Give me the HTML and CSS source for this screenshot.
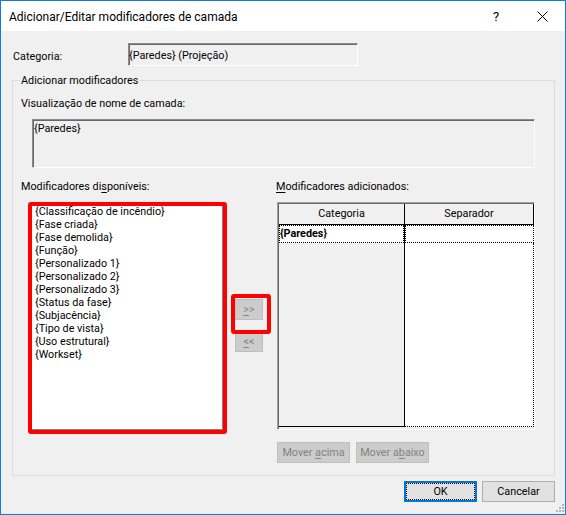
FILE: index.html
```html
<!DOCTYPE html>
<html lang="pt">
<head>
<meta charset="utf-8">
<title>Adicionar/Editar modificadores de camada</title>
<link rel="stylesheet" href="styles.css">
</head>
<body>
<div class="window">
  <div class="titlebar">
    <span class="title">Adicionar/Editar modificadores de camada</span>
    <span class="cap-btn help">?</span>
    <span class="cap-btn close"><svg width="11" height="11" viewBox="0 0 11 11"><path d="M0.5 0.5L10.5 10.5M10.5 0.5L0.5 10.5" stroke="#000" stroke-width="1" fill="none"/></svg></span>
  </div>
  <div class="content">
    <div class="cat-row">
      <div class="cat-label">Categoria:</div>
      <div class="cat-field sunken">{Paredes} (Projeção)</div>
    </div>
    <div class="group">
      <div class="group-label">Adicionar modificadores</div>
      <div class="preview-lbl">Visualização de nome de camada:</div>
      <div class="preview sunken">{Paredes}</div>
      <div class="lists">
        <div class="col-left">
          <div class="lbl">Modificadores di<u>s</u>poníveis:</div>
          <div class="left-row">
            <div class="hl-frame">
              <div class="listbox">
                <ul class="items">
                  <li>{Classificação de incêndio}</li>
                  <li>{Fase criada}</li>
                  <li>{Fase demolida}</li>
                  <li>{Função}</li>
                  <li>{Personalizado 1}</li>
                  <li>{Personalizado 2}</li>
                  <li>{Personalizado 3}</li>
                  <li>{Status da fase}</li>
                  <li>{Subjacência}</li>
                  <li>{Tipo de vista}</li>
                  <li>{Uso estrutural}</li>
                  <li>{Workset}</li>
                </ul>
              </div>
            </div>
            <div class="arrows">
              <div class="btn dis btn-sm hl"><span><u>&gt;</u>&gt;</span></div>
              <div class="btn dis btn-sm"><span><u>&lt;</u>&lt;</span></div>
            </div>
          </div>
        </div>
        <div class="col-right">
          <div class="lbl"><u>M</u>odificadores adicionados:</div>
          <div class="table">
            <div class="table-inner">
              <div class="tcol tcol1">
                <div class="th">Categoria</div>
                <div class="td">{Paredes}</div>
                <div class="tfill tfill1"></div>
              </div>
              <div class="tcol tcol2">
                <div class="th th2">Separador</div>
                <div class="td"></div>
                <div class="tfill tfill2"></div>
              </div>
            </div>
          </div>
          <div class="move-row">
            <div class="btn dis btn-md"><span>Mover <u>a</u>cima</span></div>
            <div class="btn dis btn-md"><span>Mover a<u>b</u>aixo</span></div>
          </div>
        </div>
      </div>
    </div>
    <div class="footer">
      <div class="btn btn-md ok"><span>OK</span></div>
      <div class="btn btn-md"><span>Cancelar</span></div>
    </div>
  </div>
  <svg class="grip" width="12" height="12" viewBox="0 0 12 12">
    <rect x="10" y="3" width="2" height="2" fill="#b4b4b4"/>
    <rect x="7" y="6" width="2" height="2" fill="#b4b4b4"/>
    <rect x="10" y="6" width="2" height="2" fill="#b4b4b4"/>
    <rect x="4" y="9" width="2" height="2" fill="#b4b4b4"/>
    <rect x="7" y="9" width="2" height="2" fill="#b4b4b4"/>
    <rect x="10" y="9" width="2" height="2" fill="#b4b4b4"/>
  </svg>
</div>
</body>
</html>
```
FILE: styles.css
```css
* { box-sizing: border-box; }
html, body { margin: 0; padding: 0; }
body {
  width: 566px;
  height: 515px;
  font-family: Roboto, "Liberation Sans", sans-serif;
  font-size: 10.8px;
  line-height: 13px;
  color: #000;
  background: #f0f0f0;
}
u { text-decoration: underline; text-underline-offset: 2px; }

.window {
  position: relative;
  width: 566px;
  height: 515px;
  border: 1px solid #1779d8;
  background: #f0f0f0;
  display: flex;
  flex-direction: column;
}
.titlebar {
  flex: none;
  height: 30px;
  background: #fff;
  display: flex;
  align-items: center;
}
.title {
  flex: 1;
  padding-left: 8px;
  padding-top: 1px;
  font-size: 12px;
  line-height: 16px;
}
.cap-btn {
  width: 46px;
  height: 30px;
  display: flex;
  align-items: center;
  justify-content: center;
}
.help { font-size: 13px; padding-top: 1px; }

.content { padding: 12px 10px 0 11px; }

.sunken {
  border: 1px solid;
  border-color: #8c8c8c #fff #fff #8c8c8c;
  box-shadow: inset 1px 1px 0 #696969;
  background: #f0f0f0;
}
.cat-row { display: flex; height: 23px; }
.cat-label { width: 115px; margin-left: 1px; padding-top: 7px; }
.cat-field {
  width: 230px;
  height: 23px;
  padding: 5px 0 0 0;
  white-space: nowrap;
}

.group {
  margin-top: 14px;
  border: 1px solid #dcdcdc;
  padding: 0 0 12px 8px;
}
.group-label {
  margin: -7px 0 0 -1px;
  width: max-content;
  background: #f0f0f0;
  padding: 0 1px;
}
.preview-lbl { margin-top: 10px; }
.preview {
  margin: 9px 0 0 11px;
  width: 503px;
  height: 49px;
  padding: 2px 0 0 1px;
}

.lists { display: flex; margin-top: 12px; }
.col-left { width: 255px; flex: none; }
.left-row { display: flex; margin-top: 9px; }
.hl-frame {
  margin-left: 7px;
  width: 199px;
  height: 232px;
  border: 4px solid #ff0000;
  border-radius: 3px;
}
.listbox {
  height: 100%;
  background: #fff;
  border-right: 1px solid #828282;
  border-bottom: 1px solid #828282;
  padding-left: 3px;
  overflow: hidden;
}
.items { list-style: none; margin: -1px 0 0; padding: 0; }
.items li { height: 13px; white-space: nowrap; }

.arrows {
  margin-left: 8px;
  padding-top: 97px;
  display: flex;
  flex-direction: column;
  gap: 11px;
}

.btn {
  display: flex;
  align-items: center;
  justify-content: center;
  background: #e1e1e1;
  border: 1px solid #adadad;
  white-space: nowrap;
}
.btn.dis {
  background: #cccccc;
  border-color: #bfbfbf;
  color: #838383;
}
.btn-sm { width: 28px; height: 21px; }
.btn-md { width: 73px; height: 21px; }
.hl { position: relative; }
.hl::after {
  content: "";
  position: absolute;
  left: -5px;
  top: -6px;
  width: 32px;
  height: 32px;
  border: 4px solid #ff0000;
  border-radius: 3px;
}

.col-right { flex: 1; }
.table {
  margin: 9px 0 0 1px;
  width: 258px;
  height: 228px;
  border: 1px solid;
  border-color: #a0a0a0 #fff #fff #a0a0a0;
  background: #f0f0f0;
}
.table-inner {
  height: 100%;
  border-top: 1px solid #696969;
  border-left: 1px solid #696969;
  padding-bottom: 2px;
  display: flex;
}
.tcol { display: flex; flex-direction: column; }
.tcol1 {
  width: 126px;
  border-right: 1px solid #000;
  border-bottom: 1px solid #000;
  background: #f0f0f0;
}
.tcol2 { width: 129px; }
.th {
  height: 21px;
  border-bottom: 1px solid #000;
  text-align: center;
  line-height: 19px;
  background: #f0f0f0;
}
.th2 { border-right: 1px solid #000; }
.td {
  height: 18px;
  border: 1px dotted #000;
  background: #fff;
  font-weight: bold;
  line-height: 15px;
  padding-left: 0;
}
.tfill { flex: 1; }
.tfill1 { background: #f0f0f0; }
.tfill2 {
  background: #fff;
  border-right: 1px dotted #000;
  border-bottom: 1px dotted #000;
}

.move-row {
  display: flex;
  gap: 6px;
  margin: 12px 0 0 1px;
}

.footer {
  display: flex;
  justify-content: flex-end;
  gap: 5px;
  margin-top: 5px;
}
.ok {
  border: 2px solid #0078d7;
  outline: 1px dotted #000;
  outline-offset: -3px;
}

.grip {
  position: absolute;
  right: 1px;
  bottom: 1px;
}
```
